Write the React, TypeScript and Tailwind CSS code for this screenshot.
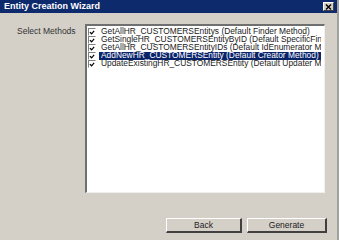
import React from "react";

const methods = [
  { name: "GetAllHR_CUSTOMERSEntitys (Default Finder Method)", selected: false },
  { name: "GetSingleHR_CUSTOMERSEntityByID (Default SpecificFinder Method)", selected: false },
  { name: "GetAllHR_CUSTOMERSEntityIDs (Default IdEnumerator Method)", selected: false },
  { name: "AddNewHR_CUSTOMERSEntity (Default Creator Method)", selected: true },
  { name: "UpdateExistingHR_CUSTOMERSEntity (Default Updater Method)", selected: false },
];

function Check() {
  return (
    <div className="w-[8px] h-[8px] shrink-0 bg-white border-t border-l border-[#808080] border-r border-b border-r-white border-b-white flex items-center justify-center">
      <svg width="7" height="7" viewBox="0 0 7 7">
        <path d="M1 3 L3 5 L6 1.5" stroke="#000" strokeWidth="1.4" fill="none" />
      </svg>
    </div>
  );
}

function Button({ label, w }: { label: string; w: string }) {
  return (
    <div
      className={`${w} h-[15px] bg-[#d4d0c8] border-t border-l border-white border-r-2 border-b-2 border-r-[#404040] border-b-[#404040] flex items-center justify-center text-[8.5px] text-[#222]`}
    >
      {label}
    </div>
  );
}

export default function App() {
  return (
    <div
      className="w-[339px] h-[240px] bg-[#d4d0c8] flex flex-col overflow-hidden border-r-2 border-[#a0a0a0]"
      style={{ fontFamily: "'Liberation Sans', Arial, sans-serif" }}
    >
      <div className="h-[13px] bg-[#0c2a6c] flex items-center justify-between pl-[4px] pr-[3px]">
        <span className="text-white font-bold text-[9px] leading-none">Entity Creation Wizard</span>
        <div className="w-[11px] h-[9px] bg-[#d4d0c8] border-t border-l border-white border-r border-b border-r-[#404040] border-b-[#404040] flex items-center justify-center">
          <svg width="7" height="6" viewBox="0 0 7 6">
            <path d="M1 0.5 L6 5.5 M6 0.5 L1 5.5" stroke="#000" strokeWidth="1.4" />
          </svg>
        </div>
      </div>
      <div className="flex pt-[11px] pl-[17px]">
        <div className="w-[68px] text-[8.5px] text-[#333] leading-none pt-[3px]">Select Methods</div>
        <div className="w-[240px] h-[169px] bg-white border-t-2 border-l-2 border-[#707070] border-r border-b border-r-[#f0f0f0] border-b-[#f0f0f0] pt-[2px] pl-[1px] overflow-hidden">
          {methods.map((m) => (
            <div key={m.name} className="flex items-center h-[8px] gap-[3px] w-[233px]">
              <Check />
              <div
                className={`flex-1 min-w-0 h-[8px] pl-[2px] text-[8.4px] leading-[7px] whitespace-nowrap overflow-x-clip ${
                  m.selected ? "bg-[#0a246a] text-white" : "text-[#1a1a1a]"
                }`}
              >
                {m.name}
              </div>
            </div>
          ))}
        </div>
      </div>
      <div className="flex justify-end gap-[5px] pr-[10px] mt-[25px]">
        <Button label="Back" w="w-[76px]" />
        <Button label="Generate" w="w-[80px]" />
      </div>
    </div>
  );
}
